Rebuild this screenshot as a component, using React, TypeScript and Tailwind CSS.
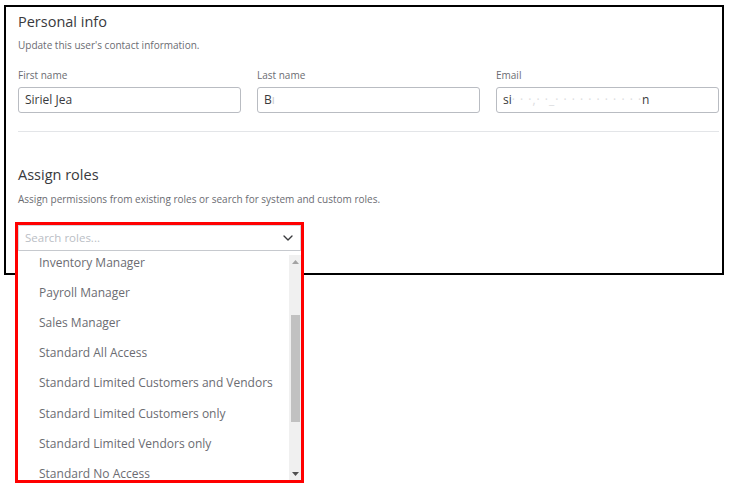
import { ChevronDown } from 'lucide-react'

const ROLES = [
  'Inventory Manager',
  'Payroll Manager',
  'Sales Manager',
  'Standard All Access',
  'Standard Limited Customers and Vendors',
  'Standard Limited Customers only',
  'Standard Limited Vendors only',
  'Standard No Access',
]

function Field({ label, children }: { label: string; children: React.ReactNode }) {
  return (
    <div className="flex flex-col">
      <span className="text-[10px] leading-[14px] text-[#6b6c72]">{label}</span>
      <div className="mt-[5px] h-[26px] rounded-[3px] border border-[#b9bcc2] px-[6px] flex items-center text-[12px] text-[#393a3d]">
        {children}
      </div>
    </div>
  )
}

export default function App() {
  return (
    <div className="w-[732px] h-[485px] bg-white overflow-hidden" style={{ fontFamily: '"Open Sans", Lato, sans-serif' }}>
      {/* Framed form */}
      <div className="ml-[4px] mt-[5px] w-[720px] h-[270px] border-2 border-black pl-[12px] pr-[3px]">
        <h2 className="mt-[5px] text-[14.5px] leading-[20px] text-[#393a3d]">Personal info</h2>
        <p className="mt-[6px] text-[10px] leading-[14px] text-[#6b6c72]">Update this user's contact information.</p>

        <div className="mt-[16px] grid grid-cols-3 gap-[16px]">
          <Field label="First name">Siriel Jea</Field>
          <Field label="Last name">B<span className="text-[#c9c9cc]">ı</span></Field>
          <Field label="Email">
            si<span className="tracking-[1px] text-[#dcdde0]">· · ·,· ·_· · · · · · · · · · ·</span>n
          </Field>
        </div>

        <div className="mt-[18px] h-[1px] bg-[#e3e5e8]" />

        <h2 className="mt-[33px] text-[14.5px] leading-[20px] text-[#393a3d]">Assign roles</h2>
        <p className="mt-[7px] text-[10px] leading-[14px] text-[#6b6c72]">
          Assign permissions from existing roles or search for system and custom roles.
        </p>

        {/* Role picker, highlighted */}
        <div className="relative z-10 mt-[16px] -ml-[3px] w-[289px] h-[261px] border-[3px] border-[#ff0000] bg-white flex flex-col">
          <div className="h-[26px] shrink-0 border border-[#d4d7dc] border-b-[#c6c9ce] flex items-center pl-[6px] pr-[4px]">
            <span className="flex-1 text-[11.5px] text-[#babec5]">Search roles...</span>
            <ChevronDown size={16} strokeWidth={2} className="text-[#393a3d]" />
          </div>
          <div className="flex-1 flex overflow-hidden">
            <div className="flex-1 overflow-hidden">
              <div className="-mt-[3px]">
                {ROLES.map((r) => (
                  <div key={r} className="h-[30.1px] flex items-center pl-[21px] text-[12px] text-[#6b6c72] whitespace-nowrap">
                    {r}
                  </div>
                ))}
              </div>
            </div>
            {/* scrollbar */}
            <div className="w-[12px] mt-[4px] bg-[#f0f0f0] flex flex-col items-center">
              <svg width="7" height="4" viewBox="0 0 7 4" className="mt-[5px]">
                <path d="M3.5 0 L7 4 L0 4 Z" fill="#a3a3a3" />
              </svg>
              <div className="mt-[51px] w-[9px] h-[107px] bg-[#c1c1c1]" />
              <div className="flex-1" />
              <svg width="7" height="4" viewBox="0 0 7 4" className="mb-[4px]">
                <path d="M0 0 L7 0 L3.5 4 Z" fill="#505050" />
              </svg>
            </div>
          </div>
        </div>
      </div>
    </div>
  )
}
